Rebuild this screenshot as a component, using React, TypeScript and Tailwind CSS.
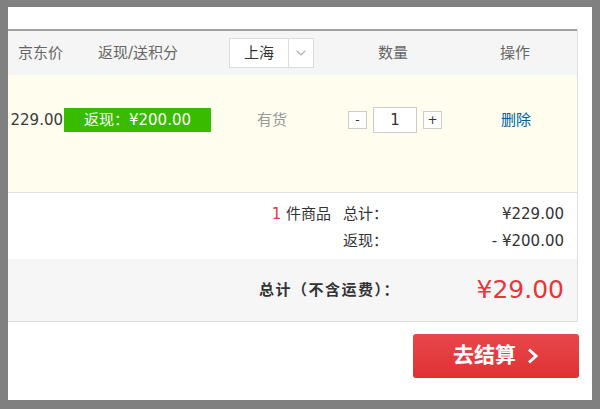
import { ChevronDown } from "lucide-react";

const font = { fontFamily: '"DejaVu Sans", "Noto Sans CJK SC", sans-serif' };

function QtyButton({ label }: { label: string }) {
  return (
    <div className="flex h-[18px] w-[19px] items-center justify-center border border-[#ccc] bg-white text-[12px] leading-none text-[#333]">
      {label}
    </div>
  );
}

export default function App() {
  return (
    <div
      className="h-[409px] w-[600px] bg-[#808080] pb-[9px] pl-[8px] pr-[8px] pt-[7px] text-[15px] text-[#333]"
      style={font}
    >
      <div className="flex h-full flex-col bg-white pt-[22px]">
        <div className="mr-[14px] border-r border-[#e0e0e0]">
          {/* header */}
          <div className="flex h-[46px] items-center border-t-2 border-[#a0a0a0] bg-[#f5f5f5] text-[#666]">
            <div className="w-[74px] pl-[10px]">京东价</div>
            <div className="w-[147px] pl-[16px]">返现/送积分</div>
            <div className="flex h-[30px] w-[85px] items-stretch border border-[#ddd] bg-white">
              <div className="flex w-[58px] items-center justify-center text-[#333]">上海</div>
              <div className="flex flex-1 items-center justify-center border-l border-[#ddd]">
                <ChevronDown className="h-[16px] w-[16px] text-[#b0b0b0]" strokeWidth={1.75} />
              </div>
            </div>
            <div className="w-[158px] text-center">数量</div>
            <div className="w-[86px] text-center">操作</div>
          </div>

          {/* item row */}
          <div className="h-[118px] border-b border-[#e0e0e0] bg-[#fffdee] pt-[21px]">
            <div className="flex h-[48px] items-center">
              <div className="w-[56px] pr-[1px] text-right text-[#3a3a3a]">229.00</div>
              <div className="flex h-[24px] w-[147px] items-center justify-center bg-[#39bb00] text-white">
                返现：¥200.00
              </div>
              <div className="w-[122px] text-center text-[#999]">有货</div>
              <div className="flex w-[125px] items-center gap-[6px] pl-[15px]">
                <QtyButton label="-" />
                <div className="flex h-[26px] w-[44px] items-center justify-center border border-[#ccc] bg-white text-[#333]">
                  1
                </div>
                <QtyButton label="+" />
              </div>
              <div className="w-[116px] text-center text-[#005ea7]">删除</div>
            </div>
          </div>

          {/* summary */}
          <div className="flex h-[66px] flex-col pr-[13px] pt-[8px] leading-[27px]">
            <div className="flex justify-end whitespace-nowrap">
              <span className="mr-[12px]">
                <span className="text-[#e4393c]">1</span> 件商品
              </span>
              <span className="w-[45px]">总计：</span>
              <span className="w-[176px] text-right">¥229.00</span>
            </div>
            <div className="flex justify-end whitespace-nowrap">
              <span className="w-[45px]">返现：</span>
              <span className="w-[176px] text-right">- ¥200.00</span>
            </div>
          </div>

          <div className="flex h-[63px] items-center justify-end whitespace-nowrap border-b border-[#ddd] bg-[#f6f6f6] pr-[13px]">
            <span className="font-bold tracking-[1.5px]">总计（不含运费）：</span>
            <span className="w-[164px] text-right text-[25px] text-[#e4393c]">¥29.00</span>
          </div>
        </div>

        <div className="mr-[13px] mt-[12px] flex h-[44px] w-[166px] items-center justify-center gap-[10px] self-end rounded-[3px] bg-gradient-to-b from-[#e8474b] to-[#df3034] text-[21px] font-bold text-white">
          <span>去结算</span>
          <svg width="13" height="16" viewBox="0 0 13 16">
            <path d="M3 1.5 L10 8 L3 14.5" fill="none" stroke="white" strokeWidth="3" />
          </svg>
        </div>
      </div>
    </div>
  );
}
